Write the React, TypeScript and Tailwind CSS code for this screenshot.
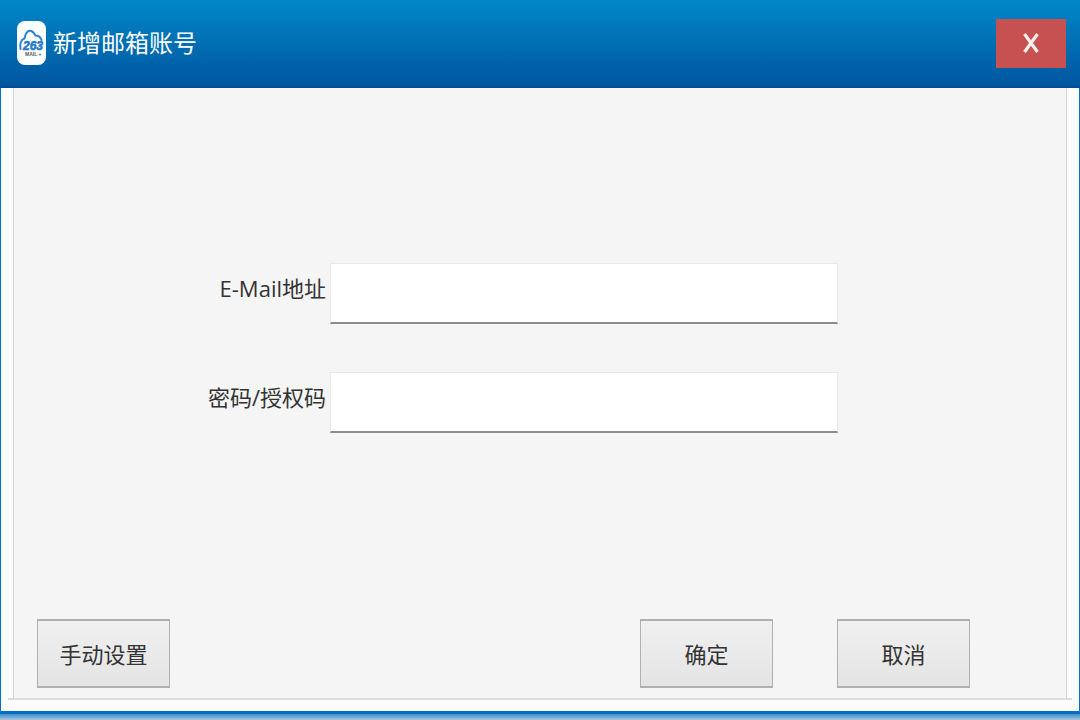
import React, { useState } from "react";

interface FieldProps {
  id: string;
  label: string;
  type: "text" | "password";
  value: string;
  onChange: (value: string) => void;
}

const Logo: React.FC = () => (
  <svg className="h-11 w-[29px] shrink-0" viewBox="0 0 29 44" aria-hidden="true">
    <rect width="29" height="44" rx="8" fill="#fcfdfe" />
    <path
      d="M3.500 28C2.500 23 4 18.500 7.500 17.500C8.500 11 11.500 9 14.500 10C16.500 11 17.500 13 18.500 14.500C21.500 14.500 23.500 16 24.500 19"
      fill="none"
      stroke="#2e83d0"
      strokeWidth="2"
      strokeLinecap="round"
    />
    <text
      x="6"
      y="29"
      fill="#2579cc"
      stroke="#2579cc"
      strokeWidth="0.600"
      fontFamily="Liberation Sans, sans-serif"
      fontSize="12"
      fontStyle="italic"
      fontWeight="bold"
    >
      263
    </text>
    <text
      x="8"
      y="35"
      fill="#555b61"
      fontFamily="Liberation Sans, sans-serif"
      fontSize="5"
      fontWeight="bold"
    >
      MAIL +
    </text>
  </svg>
);

const Field: React.FC<FieldProps> = ({ id, label, type, value, onChange }) => (
  <div className="grid grid-cols-[316fr_508fr_228fr] items-center">
    <label htmlFor={id} className="pr-1 pb-3 text-right text-[22px] leading-8 whitespace-nowrap">
      {label}
    </label>
    <input
      id={id}
      type={type}
      value={value}
      onChange={(e) => onChange(e.target.value)}
      className="h-[61px] w-full min-w-0 border border-b-2 border-[#e8e8e8] border-b-[#8c8c8c] bg-white px-3 text-[22px] outline-none"
    />
  </div>
);

const DialogButton: React.FC<React.ButtonHTMLAttributes<HTMLButtonElement>> = (props) => (
  <button
    type="button"
    className="h-[69px] w-[133px] border border-y-2 border-[#b0b0b0] bg-linear-to-b from-[#f0f0f0] to-[#e4e4e4] text-[22px] leading-8 whitespace-nowrap"
    {...props}
  />
);

const App: React.FC = () => {
  const [email, setEmail] = useState("");
  const [password, setPassword] = useState("");

  return (
    <div className="flex min-h-screen flex-col bg-[#fcfcfc] font-['Open_Sans','Noto_Sans_CJK_SC',sans-serif] text-[#333333]">
      {/* Title bar */}
      <header className="flex h-[88px] items-center justify-between border-b-2 border-[#004c98] bg-linear-to-b from-[#0088c8] to-[#00569f] pr-[14px] pl-[17px]">
        <div className="flex items-center gap-[7px]">
          <Logo />
          <h1 className="text-2xl leading-9 font-normal text-white">新增邮箱账号</h1>
        </div>
        <button
          type="button"
          aria-label="关闭"
          className="flex h-[49px] w-[70px] items-center justify-center bg-[#c75050]"
        >
          <svg className="h-5 w-4" viewBox="0 0 16 20" aria-hidden="true">
            <path d="M1.500 1L14.500 19M14.500 1L1.500 19" stroke="#f8eeee" strokeWidth="3.200" />
          </svg>
        </button>
      </header>

      {/* Window body */}
      <main className="flex flex-1 flex-col border-x border-[#0070c8] px-[7px] pb-[11px]">
        <div className="flex flex-1 flex-col border-b-2 border-[#dcdcdc] px-[5px]">
          <form
            className="flex flex-1 flex-col justify-between border-x border-[#d2d2d2] bg-[#f5f5f5] pt-[175px] pb-[10px]"
            onSubmit={(e) => e.preventDefault()}
          >
            <div className="flex flex-col gap-12">
              <Field id="email" label="E-Mail地址" type="text" value={email} onChange={setEmail} />
              <Field
                id="password"
                label="密码/授权码"
                type="password"
                value={password}
                onChange={setPassword}
              />
            </div>

            <div className="flex justify-between pr-24 pl-[23px]">
              <DialogButton>手动设置</DialogButton>
              <div className="flex gap-16">
                <DialogButton type="submit">确定</DialogButton>
                <DialogButton>取消</DialogButton>
              </div>
            </div>
          </form>
        </div>
      </main>
      <footer className="h-[9px] border-t-[3px] border-[#006fc8] bg-linear-to-b from-[#3b8dcc] to-[#a4c4dc]" />
    </div>
  );
};

export default App;
